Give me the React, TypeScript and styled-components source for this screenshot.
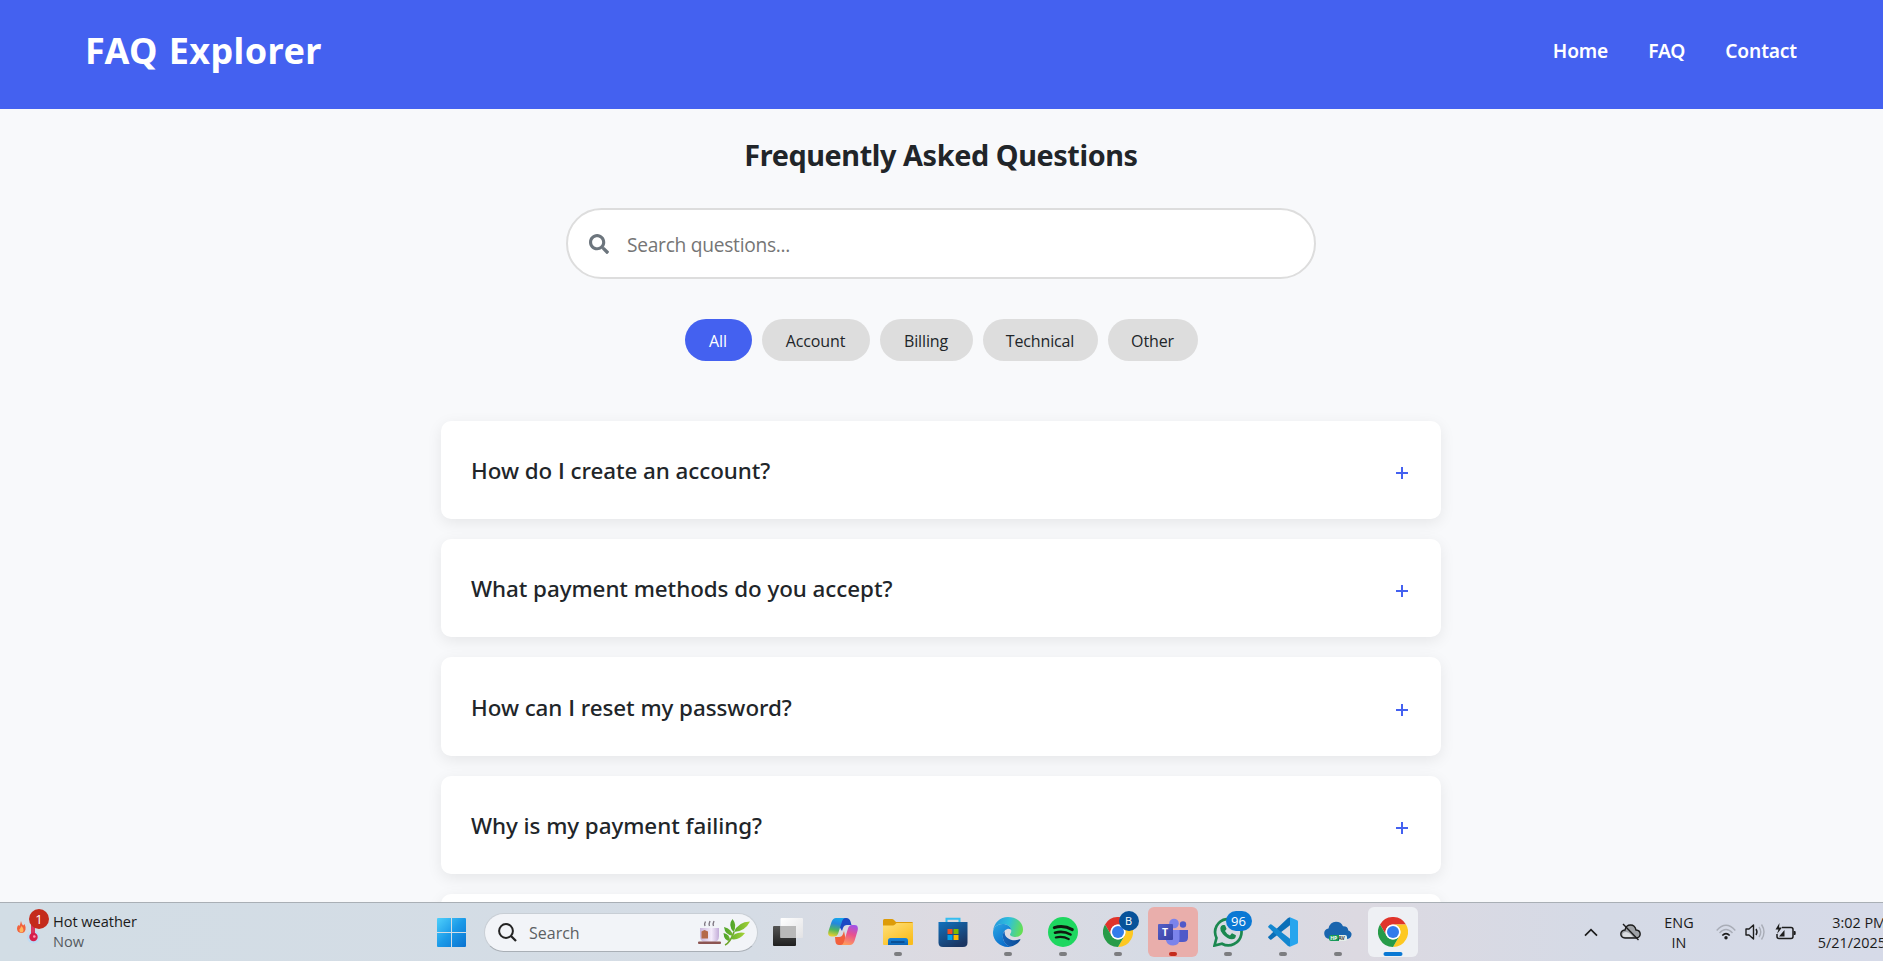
import React from 'react';
import styled, { createGlobalStyle } from 'styled-components';
import { FaSearch } from 'react-icons/fa';

const GlobalStyle = createGlobalStyle`
  * { box-sizing: border-box; }
  body {
    margin: 0;
    background: #f8f9fb;
    color: #212529;
    font-family: "Open Sans", "Noto Sans", sans-serif;
  }
  svg { display: block; }
`;

const Screen = styled.div`
  display: flex;
  flex-direction: column;
  width: 1883px;
  height: 961px;
  overflow: hidden;
`;

const Page = styled.div`
  height: 902px;
  flex: none;
  overflow: hidden;
`;

const Header = styled.header`
  display: flex;
  justify-content: space-between;
  align-items: center;
  height: 109px;
  padding: 0 86px 7px 85px;
  background: #4461f0;
  color: #fff;
  font-family: "Noto Sans", sans-serif;
`;

const Logo = styled.div`
  font-size: 36px;
  font-weight: 700;
  letter-spacing: 0.4px;
  word-spacing: 1px;
  line-height: 50px;
`;

const Nav = styled.nav`
  display: flex;
  gap: 40px;
`;

const NavLink = styled.a`
  color: #fff;
  font-size: 19.2px;
  font-weight: 600;
  letter-spacing: -0.15px;
  line-height: 28px;
`;

const Main = styled.main`
  display: flex;
  flex-direction: column;
  align-items: center;
  padding-right: 1px;
`;

const Title = styled.h1`
  margin: 26px 0 33px;
  font-family: "Noto Sans", sans-serif;
  font-size: 28.8px;
  font-weight: 700;
  letter-spacing: -0.4px;
  line-height: 40px;
`;

const SearchBox = styled.div`
  display: flex;
  align-items: center;
  gap: 18px;
  width: 750px;
  height: 71px;
  padding-left: 21px;
  border: 2px solid #ddd;
  border-radius: 36px;
  background: #fff;
  color: #6c757d;
`;

const SearchInput = styled.input`
  flex: 1;
  margin-right: 30px;
  padding: 2px 0 0;
  border: 0;
  outline: 0;
  background: transparent;
  font: 400 19.2px "Open Sans", sans-serif;
  letter-spacing: -0.28px;
  &::placeholder { color: #757575; opacity: 1; }
`;

const Filters = styled.div`
  display: flex;
  gap: 10px;
  margin-top: 40px;
`;

const Filter = styled.button<{ $width: number; $active?: boolean }>`
  width: ${p => p.$width}px;
  height: 42px;
  padding: 2px 0 0;
  border: 0;
  border-radius: 21px;
  background: ${p => (p.$active ? '#4461f0' : '#ddd')};
  color: ${p => (p.$active ? '#fff' : '#212529')};
  font: 400 16px "Open Sans", sans-serif;
  letter-spacing: -0.13px;
`;

const FaqList = styled.div`
  display: flex;
  flex-direction: column;
  gap: 20px;
  width: 1000px;
  margin-top: 59.6px;
`;

const FaqCard = styled.section`
  display: flex;
  justify-content: space-between;
  align-items: center;
  flex: none;
  height: 98.4px;
  padding: 2px 33px 0 30px;
  border-radius: 10px;
  background: #fff;
  box-shadow: 0 4px 15px rgba(0, 0, 0, 0.08);
`;

const Question = styled.h3`
  margin: 0;
  font-family: "Noto Sans", sans-serif;
  font-size: 22.4px;
  font-weight: 500;
  line-height: 30px;
  letter-spacing: -0.05px;
`;

const PlainCap = styled.span`
  font-family: "Open Sans", sans-serif;
  font-weight: 600;
`;

const Toggle = styled.span`
  display: block;
  margin-top: 4px;
`;

const Taskbar = styled.footer`
  position: relative;
  z-index: 1;
  display: flex;
  align-items: stretch;
  flex: none;
  height: 59px;
  border-top: 1px solid #a9afb5;
  background: linear-gradient(90deg, #d2dde5 0%, #d5dce5 40%, #dddae1 51%, #d5dbe5 62%, #dcd9e1 72%, #d5dae6 85%, #d6dae8 100%);
  color: #1b1b1b;
`;

const Weather = styled.div`
  display: flex;
  gap: 3px;
  width: 437px;
  padding: 5px 0 0 16px;
`;

const WeatherLabel = styled.div`
  padding-top: 3px;
  font-size: 14.6px;
  line-height: 20px;
  letter-spacing: -0.05px;
  span { display: block; color: #555b60; }
`;

const StartButton = styled.div`
  width: 47px;
  padding-top: 15px;
`;

const TaskSearch = styled.div`
  display: flex;
  align-items: center;
  width: 274px;
  height: 39px;
  margin-top: 10px;
  padding: 0 7px 0 13px;
  border: 1px solid #c8ced5;
  border-bottom-color: #a9afb6;
  border-radius: 20px;
  background: #f2f4f8;
  color: #5c5f63;
  font-size: 16px;
  svg + span { margin: 0 auto 0 12px; }
`;

const Apps = styled.div`
  display: grid;
  grid-template-columns: repeat(12, 55px);
  margin-left: 2px;
`;

const AppSlot = styled.div`
  display: flex;
  justify-content: center;
  align-items: flex-start;
  padding-top: 4px;
`;

const AppTile = styled.div<{ $bg?: string }>`
  position: relative;
  display: flex;
  justify-content: center;
  width: 50px;
  height: 50px;
  padding-top: 10px;
  border-radius: 6px;
  background: ${p => p.$bg || 'transparent'};
`;

const Indicator = styled.i<{ $color: string; $wide?: boolean }>`
  position: absolute;
  bottom: 1px;
  left: 50%;
  width: ${p => (p.$wide ? 19 : 8)}px;
  height: 4px;
  border-radius: 2px;
  background: ${p => p.$color};
  transform: translateX(-50%);
`;

const Badge = styled.b<{ $bg: string; $left: number; $top: number; $width: number; $size?: number }>`
  position: absolute;
  left: ${p => p.$left}px;
  top: ${p => p.$top}px;
  width: ${p => p.$width}px;
  height: 20px;
  border-radius: 10px;
  background: ${p => p.$bg};
  color: #fff;
  font-size: ${p => p.$size || 13}px;
  font-weight: 400;
  line-height: 20px;
  text-align: center;
`;

const WeatherIcon = styled.div`
  position: relative;
  width: 34px;
  height: 42px;
`;

const Tray = styled.div`
  display: flex;
  align-items: center;
  flex: 1;
  justify-content: flex-end;
  min-width: 0;
`;

const TrayIcon = styled.div<{ $gap: number }>`
  margin-right: ${p => p.$gap}px;
`;

const TrayText = styled.div<{ $align: string; $width: number; $gap?: number }>`
  width: ${p => p.$width}px;
  margin-top: 2px;
  margin-right: ${p => p.$gap || 0}px;
  text-align: ${p => p.$align};
  white-space: nowrap;
  font-size: 14.4px;
  line-height: 20px;
`;

const Clock = styled(TrayText)`
  flex: none;
  margin-right: -3px;
`;

const StartLogo = () => (
  <svg width="29" height="29" viewBox="0 0 29 29">
    <defs>
      <linearGradient id="win" gradientUnits="userSpaceOnUse" x1="0" y1="0" x2="29" y2="29">
        <stop offset="0" stopColor="#4fd0fb" />
        <stop offset=".5" stopColor="#1b9ae8" />
        <stop offset="1" stopColor="#0a72d0" />
      </linearGradient>
    </defs>
    <path fill="url(#win)" d="M1 0h13v14H0V1q0-1 1-1zM15 0h13q1 0 1 1v13H15zM0 15h14v14H1q-1 0-1-1zM15 15h14v13q0 1-1 1H15z" />
  </svg>
);

const Magnifier = () => (
  <svg width="19" height="19" viewBox="0 0 19 19" fill="none" stroke="#232323" strokeWidth="2">
    <circle cx="8" cy="8" r="6.9" />
    <path strokeWidth="2.3" d="M13 13l5 5" />
  </svg>
);

const TeaAndLeaf = () => (
  <svg width="52" height="28" viewBox="0 0 52 28">
    <defs>
      <linearGradient id="cup" x1="0" x2="1">
        <stop offset="0" stopColor="#c9b5da" />
        <stop offset=".6" stopColor="#f4ecfb" />
        <stop offset="1" stopColor="#c3add8" />
      </linearGradient>
      <linearGradient id="leaf" x1="0" x2="1">
        <stop offset="0" stopColor="#4da32a" />
        <stop offset="1" stopColor="#a5d236" />
      </linearGradient>
    </defs>
    <path d="M7 7q-1-2 .5-4.500M11.500 7q-1-2 .5-5M15.500 7q-1-2 .5-5" stroke="#7d7680" strokeWidth="1.400" fill="none" />
    <path d="M2 9h19v8q0 6-6 6H8q-6 0-6-6z" fill="url(#cup)" />
    <path d="M3.500 12.500l3-1.500 3.500 1.500v7H3.500z" fill="#b5694a" />
    <rect x="0" y="22.500" width="23" height="2.500" rx="1" fill="#8c5552" />
    <path d="M27 26q5-2 9-13" stroke="#6fa52c" strokeWidth="1.700" fill="none" />
    <g fill="url(#leaf)">
      <path d="M35.500 13q-6-7-1-13 5 6 1 13zM36 13q4-10 16-10.500-5 10-16 10.500z" />
      <path d="M35 17q-8-1-9-9 8 2 9 9zM32.500 20q4.500-8 14.500-6-6 8-14.500 6zM32 22q-6 0-6.500-8 6.500 1 6.500 8z" />
    </g>
  </svg>
);

const TaskView = () => (
  <svg width="30" height="30" viewBox="0 0 30 30">
    <defs>
      <linearGradient id="tvd" x2="0" y2="1"><stop stopColor="#555" /><stop offset="1" stopColor="#1f1f1f" /></linearGradient>
      <linearGradient id="tvl" x2="1" y2="1"><stop stopColor="#fff" /><stop offset="1" stopColor="#e2e2e4" /></linearGradient>
    </defs>
    <rect x="0" y="9" width="23" height="20" rx="1" fill="url(#tvd)" />
    <rect x="7.500" y="1" width="22.500" height="20" rx="1" fill="url(#tvl)" />
    <rect x="7.500" y="9" width="15.500" height="12" fill="#b9b9b9" />
  </svg>
);

const Copilot = () => (
  <svg width="30" height="30" viewBox="0 0 30 30">
    <defs>
      <linearGradient id="cpa" x1=".5" y1="0" x2=".3" y2="1">
        <stop stopColor="#16a5ec" /><stop offset=".3" stopColor="#2587dd" /><stop offset=".65" stopColor="#4fb65e" /><stop offset="1" stopColor="#eed02c" />
      </linearGradient>
      <linearGradient id="cpb" x1=".7" y1="0" x2=".4" y2="1">
        <stop stopColor="#a152e8" /><stop offset=".45" stopColor="#e8508f" /><stop offset="1" stopColor="#ff9a5c" />
      </linearGradient>
    </defs>
    <path d="M13 1h5.500q3 0 4 3.500L23.500 8H19q-3 0-4 3l-1 3-3-5z" fill="#1b49c4" />
    <path d="M8 1h9.500Q15 1 14 4.500l-4 12.500Q9 19.500 6 19.500H3.500Q-1 19 .5 14L3.500 5Q5 1 8 1z" fill="url(#cpa)" />
    <path d="M7 20h4q3 0 4-3l1-3 2 10q-1 4-4 4h-3q-3 0-3.500-3z" fill="#f2603c" />
    <path d="M22 28h-9.500q2.500 0 3.500-3.500l4-13Q21 8 24 8h2.500Q31 8 29.500 14l-3 10Q25 28 22 28z" fill="url(#cpb)" />
  </svg>
);

const Folder = () => (
  <svg width="30" height="30" viewBox="0 0 30 30">
    <defs>
      <linearGradient id="fo" x2=".7" y2="1"><stop stopColor="#ffe07a" /><stop offset="1" stopColor="#fabd1c" /></linearGradient>
      <linearGradient id="fb" x2="0" y2="1"><stop stopColor="#1885da" /><stop offset="1" stopColor="#0a62b4" /></linearGradient>
    </defs>
    <path d="M0 3.500Q0 2 1.500 2H9q1 0 2 1l2 2h15.500Q30 5 30 6v4H0z" fill="#dd9b08" />
    <path d="M0 8.500h10q1 0 2-1L13.500 6H30v21q0 1-1 1H1q-1 0-1-1z" fill="url(#fo)" />
    <path d="M5 28v-4.500Q5 21 7.500 21h15q2.500 0 2.500 2.500V28z" fill="url(#fb)" />
    <path d="M8 25h13.500" stroke="#063f7d" strokeWidth="1.300" />
  </svg>
);

const Store = () => (
  <svg width="30" height="30" viewBox="0 0 30 30">
    <defs><linearGradient id="st" x2=".6" y2="1"><stop stopColor="#1272be" /><stop offset="1" stopColor="#1b3663" /></linearGradient></defs>
    <path d="M8.500 6V1.800h13V6" fill="none" stroke="#35bdf0" strokeWidth="2" />
    <path d="M.5 5h29v20.500q0 4.500-4.500 4.500H5Q.5 30 .5 25.500z" fill="url(#st)" />
    <path fill="#f25022" d="M9.500 12h5v5h-5z" /><path fill="#7fba00" d="M15.500 12h5v5h-5z" />
    <path fill="#00a4ef" d="M9.500 18h5v5h-5z" /><path fill="#ffb900" d="M15.500 18h5v5h-5z" />
  </svg>
);

const Edge = () => (
  <svg width="30" height="30" viewBox="0 0 30 30">
    <defs>
      <linearGradient id="e1" x1="0" y1=".3" x2="1" y2=".5"><stop stopColor="#2497dd" /><stop offset=".5" stopColor="#2fc0dc" /><stop offset="1" stopColor="#66e052" /></linearGradient>
      <linearGradient id="e2" x1="0" y1="0" x2=".6" y2="1"><stop stopColor="#2aa7e4" /><stop offset="1" stopColor="#0a6bcb" /></linearGradient>
      <linearGradient id="e3" x1="0" x2="1"><stop stopColor="#1464ba" /><stop offset="1" stopColor="#0c4a93" /></linearGradient>
    </defs>
    <path d="M.2 14C.8 6 7 0 15 0c9 0 15 6 15 12.500 0 5-4 7.500-7.500 7.500-3 0-5.500-1.200-5.500-2.500 0-1 1.300-1.300 1.300-3.500C18.300 9.500 14 7 9.500 7 4.500 7 1 10 .2 14z" fill="url(#e1)" />
    <path d="M0 16C0 10.500 4 7 9.500 7c4.500 0 8.800 2.500 8.800 6.500 0-1-2-2-4-1.500-3 1-4.500 4-4.500 7.500 0 5 4 9.500 8 10-1 .4-2 .5-3 .5C7 30 0 23.500 0 16z" fill="url(#e2)" />
    <path d="M11.800 14c-1.600 1.500-2 3.500-2 5.500 0 5 3.700 9.500 8 10 4.200-.7 7.500-3.300 9.500-6.500.4-.7-.1-1-.7-.7-1.200.6-3 .9-4.600.9-6.500 0-11.200-4-10.200-9.200z" fill="url(#e3)" />
  </svg>
);

const Spotify = () => (
  <svg width="30" height="30" viewBox="0 0 30 30">
    <circle cx="15" cy="15" r="15" fill="#1ed760" />
    <g fill="none" stroke="#10190f" strokeLinecap="round">
      <path strokeWidth="3" d="M6.300 10.600q9.500-2.700 18 2" />
      <path strokeWidth="2.600" d="M7 15.700q8.500-2.300 15.500 1.800" />
      <path strokeWidth="2.100" d="M7.800 20.400q7-1.700 13 1.700" />
    </g>
  </svg>
);

const Chrome = () => (
  <svg width="30" height="30" viewBox="0 0 30 30">
    <path d="M2 7.500A15 15 0 0 1 28 7.500H15A7.500 7.500 0 0 0 8.500 18.750z" fill="#e0342b" />
    <path d="M28 7.500A15 15 0 0 1 15 30l6.500-11.250A7.500 7.500 0 0 0 15 7.500z" fill="#fdc822" />
    <path d="M15 30A15 15 0 0 1 2 7.500l6.500 11.250A7.500 7.500 0 0 0 21.500 18.750z" fill="#279b48" />
    <circle cx="15" cy="15" r="7.500" fill="#fff" />
    <circle cx="15" cy="15" r="6" fill="#327ceb" />
  </svg>
);

const TeamsT = styled.b`
  position: absolute;
  left: 10px;
  top: 17px;
  width: 15px;
  height: 16px;
  border-radius: 1px;
  background: linear-gradient(135deg, #5660c7, #3840a4);
  color: #fff;
  font-size: 10.5px;
  line-height: 16px;
  text-align: center;
`;

const Teams = () => (
  <>
    <svg width="30" height="30" viewBox="0 0 30 30">
      <circle cx="16" cy="6.500" r="4.800" fill="#7b83eb" />
      <circle cx="25" cy="7.500" r="3.200" fill="#5059c9" />
      <path d="M19 13h11v7.500q0 4.500-5 4.500h-4z" fill="#5059c9" />
      <path d="M8 13h13.500v9q0 6.500-6.500 6.500-5.500 0-7-5z" fill="#7b83eb" />
    </svg>
    <TeamsT>T</TeamsT>
  </>
);

const WhatsApp = () => (
  <svg width="30" height="30" viewBox="0 0 30 30">
    <path d="M1.500 28.500l2-7.500A13.200 13.200 0 1 1 9 26.700z" fill="none" stroke="#1b8850" strokeWidth="2.700" />
    <path d="M9.800 8h1.600q.6 0 .8.600l1.200 2.900q.2.500-.2 1L12 14q1.700 3.200 5 4.500l1.600-1.900q.4-.4.900-.2l3 1.500q.5.200.4.900-.3 3.500-4 3.500-4.400 0-9-5-3-3.400-2.600-6.300Q7.700 8.500 9.800 8z" fill="#1b8850" />
  </svg>
);

const VsCode = () => (
  <svg width="30" height="30" viewBox="0 0 30 30">
    <path d="M22 .3L29 3.300q1 .4 1 1.500v20.500q0 1-1 1.500l-7 3z" fill="#27a5ee" />
    <path d="M22 .2v8L3.500 22.500q-.8.600-1.500 0L.5 21q-.8-.8 0-1.500L20 1z" fill="#0b6fb8" />
    <path d="M22 29.800v-8L3.500 7.500Q2.700 6.900 2 7.500L.5 9q-.8.800 0 1.500L20 29z" fill="#1387d0" />
  </svg>
);

const CloudLabel = styled.b`
  position: absolute;
  left: 16px;
  top: 28px;
  width: 18px;
  height: 6px;
  border-radius: 2px;
  background: linear-gradient(90deg, #179a59 0 53%, #e5eee8 53%);
  color: #fff;
  font-size: 5px;
  line-height: 6px;
  white-space: nowrap;
  text-align: center;
  span { color: #333; margin-left: 1px; }
`;

const CloudApp = () => (
  <>
    <svg width="28" height="30" viewBox="0 0 28 30">
      <path d="M6 22q-6-.5-5.800-6 .3-4 4.300-4.500Q6 5 12 4.800q5 0 7 4.400 5-.2 5.300 4.300Q28 15 27.500 18q-.8 4-5 4z" fill="#1a65ae" />
    </svg>
    <CloudLabel>HP<span>AV</span></CloudLabel>
  </>
);

const HotIcon = () => (
  <svg width="30" height="42" viewBox="0 0 30 42">
    <circle cx="17.500" cy="29" r="6.500" fill="#bddcf5" />
    <path d="M17 12v16" stroke="#d9365f" strokeWidth="4" />
    <circle cx="17.500" cy="29" r="4.200" fill="#d61e4d" />
    <circle cx="18.300" cy="28.500" r="1.300" fill="#ff9cb8" />
    <path d="M5 13q.5 3 2.300 4.500L8.500 16q1.500 3 1 5.500-.7 3.500-4.200 3.500Q1 24.500 1 20.500q0-2 1.300-3.500l1 1Q4.500 16 5 13z" fill="#f2633d" />
    <path d="M5.500 18q2 2 2 4t-2 2.500Q3 24 3.500 21.500z" fill="#ffb65e" />
  </svg>
);

const Chevron = () => (
  <svg width="14" height="9" viewBox="0 0 14 9" fill="none" stroke="#1d1d1d" strokeWidth="1.700"><path d="M1 7.700l6-6 6 6" /></svg>
);

const CloudOff = () => (
  <svg width="21" height="18" viewBox="0 0 21 18" fill="none" stroke="#1d1d1d" strokeWidth="1.400">
    <path fill="#9fa2a7" d="M5 15q-4-.3-4.200-4Q1 7.500 5 7q1-5 5.500-5T16 7q4 .3 4.200 4-.2 3.700-4.200 4z" />
    <path fill="#dadcdf" stroke="none" d="M5.500 14q-3 0-3-2.500T6 9q3 0 5 2.500l2 2.500z" />
    <path d="M3 1l15.500 16" />
  </svg>
);

const Wifi = () => (
  <svg width="20" height="16" viewBox="0 0 20 16" fill="none" strokeWidth="1.400">
    <path stroke="#a9adb7" d="M.7 6.500Q10-4 19.300 6.500M3.500 9q6.500-7 13 0" />
    <path stroke="#1d1d1d" strokeWidth="1.600" d="M6.300 11.500q3.700-3.600 7.400 0" />
    <circle cx="10" cy="13.700" r="1.700" fill="#1d1d1d" />
  </svg>
);

const Speaker = () => (
  <svg width="21" height="18" viewBox="0 0 21 18" fill="none" stroke="#1d1d1d" strokeWidth="1.400">
    <path strokeLinejoin="round" d="M1 6h3l4.500-4v14L4 12H1z" />
    <path d="M11 6q2 3 0 6" />
    <path stroke="#a9adb7" d="M14 4q3.500 5 0 10M16.500 1.500q5 7.500 0 15" />
  </svg>
);

const Battery = () => (
  <svg width="21" height="18" viewBox="0 0 21 18">
    <path d="M7 4.500h9q2 0 2 2v7q0 2-2 2H4q-2 0-2-2V11" fill="none" stroke="#1d1d1d" strokeWidth="1.500" />
    <path d="M18.700 8h1q1 0 1 1v2q0 1-1 1h-1z" fill="#1d1d1d" />
    <path d="M4 13.500L9.500 7v6.500z" fill="#1d1d1d" />
    <path d="M4.500 0L.5 6.500h3L2 11l5-6.500H4z" fill="#1d1d1d" />
  </svg>
);

const PlusMark = () => (
  <svg width="12" height="12" viewBox="0 0 12 12" shapeRendering="crispEdges">
    <path d="M0 5h12v2H0zM5 0h2v12H5z" fill="#4461f0" />
  </svg>
);

const filters: [string, number][] = [['All', 67], ['Account', 108], ['Billing', 93], ['Technical', 115], ['Other', 90]];
const questions: React.ReactNode[] = [
  <>How do <PlainCap>I</PlainCap> create an account?</>,
  'What payment methods do you accept?',
  <>How can <PlainCap>I</PlainCap> reset my password?</>,
  'Why is my payment failing?',
];

type AppItem = { icon: React.ReactNode; bg?: string; bar?: string; wide?: boolean; badge?: React.ReactNode };
const apps: AppItem[] = [
  { icon: <TaskView /> },
  { icon: <Copilot /> },
  { icon: <Folder />, bar: '#7c7d80' },
  { icon: <Store /> },
  { icon: <Edge />, bar: '#7c7d80' },
  { icon: <Spotify />, bar: '#7c7d80' },
  { icon: <Chrome />, bar: '#7c7d80', badge: <Badge $bg="#07529a" $left={26} $top={4} $width={20} $size={11}>B</Badge> },
  { icon: <Teams />, bg: '#e9aeab', bar: '#c42b1c' },
  { icon: <WhatsApp />, bar: '#7c7d80', badge: <Badge $bg="#0a78d4" $left={23} $top={4} $width={26}>96</Badge> },
  { icon: <VsCode />, bar: '#7c7d80' },
  { icon: <CloudApp />, bar: '#7c7d80' },
  { icon: <Chrome />, bg: '#eef0f4', bar: '#0a78d4', wide: true },
];

export default function App() {
  return (
    <Screen>
      <GlobalStyle />
      <Page>
        <Header>
          <Logo>FAQ Explorer</Logo>
          <Nav>
            <NavLink>Home</NavLink>
            <NavLink>FAQ</NavLink>
            <NavLink>Contact</NavLink>
          </Nav>
        </Header>
        <Main>
          <Title>Frequently Asked Questions</Title>
          <SearchBox>
            <FaSearch size={20} />
            <SearchInput placeholder="Search questions..." />
          </SearchBox>
          <Filters>
            {filters.map(([label, width], i) => (
              <Filter key={label} $width={width} $active={i === 0}>{label}</Filter>
            ))}
          </Filters>
          <FaqList>
            {questions.map((q, i) => (
              <FaqCard key={i}>
                <Question>{q}</Question>
                <Toggle><PlusMark /></Toggle>
              </FaqCard>
            ))}
            <FaqCard />
          </FaqList>
        </Main>
      </Page>
      <Taskbar>
        <Weather>
          <WeatherIcon>
            <HotIcon />
            <Badge $bg="#c42b1c" $left={13} $top={1} $width={20}>1</Badge>
          </WeatherIcon>
          <WeatherLabel>Hot weather<span>Now</span></WeatherLabel>
        </Weather>
        <StartButton><StartLogo /></StartButton>
        <TaskSearch>
          <Magnifier />
          <span>Search</span>
          <TeaAndLeaf />
        </TaskSearch>
        <Apps>
          {apps.map((a, i) => (
            <AppSlot key={i}>
              <AppTile $bg={a.bg}>
                {a.icon}
                {a.badge}
                {a.bar && <Indicator $color={a.bar} $wide={a.wide} />}
              </AppTile>
            </AppSlot>
          ))}
        </Apps>
        <Tray>
          <TrayIcon $gap={22}><Chevron /></TrayIcon>
          <TrayIcon $gap={21}><CloudOff /></TrayIcon>
          <TrayText $align="center" $width={34} $gap={20}><div>ENG</div><div>IN</div></TrayText>
          <TrayIcon $gap={9}><Wifi /></TrayIcon>
          <TrayIcon $gap={9}><Speaker /></TrayIcon>
          <TrayIcon $gap={16}><Battery /></TrayIcon>
          <Clock $align="right" $width={74}><div>3:02 PM</div><div>5/21/2025</div></Clock>
        </Tray>
      </Taskbar>
    </Screen>
  );
}
